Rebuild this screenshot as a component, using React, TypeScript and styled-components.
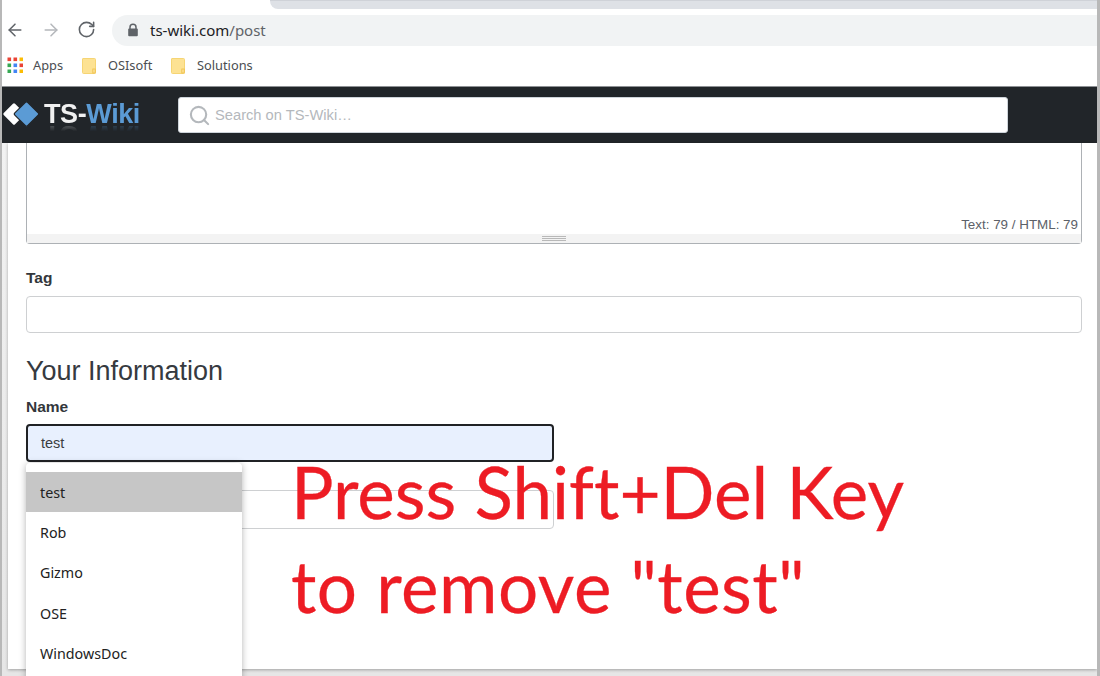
import React from "react";
import styled, { createGlobalStyle } from "styled-components";
import { ArrowLeft, ArrowRight, RotateCw, Search } from "lucide-react";

const GlobalStyle = createGlobalStyle`
  html, body {
    margin: 0;
    padding: 0;
    background: #fff;
  }
  * {
    box-sizing: border-box;
  }
`;

const Window = styled.div`
  position: relative;
  width: 1100px;
  height: 676px;
  overflow: hidden;
  display: flex;
  flex-direction: column;
  border-left: 2px solid #b8b8b8;
  border-right: 3px solid #b8b8b8;
  background: #fff;
  font-family: "Liberation Sans", Arial, sans-serif;
  color: #212529;
`;

const TabStrip = styled.div`
  flex: none;
  height: 14px;
  padding-left: 268px;
`;

const Tab = styled.div`
  height: 9px;
  background: #dee1e6;
  border-top: 1px solid #cfd2d8;
  border-bottom-left-radius: 8px;
`;

const Toolbar = styled.div`
  flex: none;
  height: 32px;
  display: flex;
  align-items: center;
`;

const NavIcons = styled.div`
  flex: none;
  width: 110px;
  padding-left: 3px;
  display: flex;
  gap: 16px;
`;

const NavButton = styled.span<{ $dim?: boolean }>`
  display: flex;
  width: 20px;
  height: 20px;
  color: ${(p) => (p.$dim ? "#b4b7bb" : "#5f6368")};
`;

const AddressPill = styled.div`
  flex: 1;
  height: 31px;
  display: flex;
  align-items: center;
  gap: 11px;
  padding-left: 15px;
  background: #f1f3f4;
  border-radius: 16px 0 0 16px;
  font-family: "Noto Sans", "Open Sans", sans-serif;
  font-size: 15px;
  color: #202124;
`;

const UrlPath = styled.span`
  color: #5f6368;
`;

const BookmarkBar = styled.div`
  flex: none;
  height: 40px;
  display: flex;
  align-items: center;
  padding-left: 5px;
  padding-bottom: 2px;
  font-family: "Noto Sans", "Open Sans", sans-serif;
  font-size: 12.8px;
  color: #4a4d51;
`;

const Bookmark = styled.div<{ $width: number; $gap: number }>`
  display: flex;
  align-items: center;
  gap: ${(p) => p.$gap}px;
  width: ${(p) => p.$width}px;
`;

const Navbar = styled.div`
  flex: none;
  height: 57px;
  display: flex;
  align-items: center;
  background: #212529;
  border-top: 1px solid #8d9094;
`;

const Logo = styled.div`
  flex: none;
  width: 176px;
  padding-bottom: 2px;
  display: flex;
  align-items: center;
  gap: 3px;
`;

const LogoText = styled.div`
  font-family: "Liberation Sans", Arial, sans-serif;
  font-size: 27px;
  font-weight: 700;
  line-height: 30px;
  letter-spacing: -0.4px;
  color: #f0f0f0;
  -webkit-box-reflect: below -9px linear-gradient(transparent 62%, rgba(255, 255, 255, 0.45));
`;

const LogoAccent = styled.span`
  color: #5b9bd5;
`;

const SearchBox = styled.div`
  width: 830px;
  height: 36px;
  display: flex;
  align-items: center;
  gap: 4px;
  padding-left: 9px;
  background: #fff;
  border: 1px solid #ced4da;
  border-radius: 3px;
  font-size: 14.7px;
  color: #b4b8bc;
`;

const Page = styled.div`
  flex: 1;
  min-height: 0;
  padding: 0 0 7px 6px;
  background: linear-gradient(#f2f2f2, #e6e6e6);
`;

const Card = styled.div`
  height: 100%;
  padding: 0 15px 0 18px;
  background: #fff;
  box-shadow: 0 1px 3px rgba(0, 0, 0, 0.3);
`;

const EditorBox = styled.div`
  height: 101px;
  display: flex;
  flex-direction: column;
  justify-content: flex-end;
  border: 1px solid #adb1b5;
  border-top: 0;
  border-radius: 0 0 4px 4px;
`;

const CharCount = styled.div`
  padding: 0 3px 2px 0;
  text-align: right;
  font-size: 13.4px;
  line-height: 15px;
  color: #5c6168;
`;

const ResizeBar = styled.div`
  height: 9px;
  display: flex;
  flex-direction: column;
  align-items: center;
  justify-content: center;
  gap: 1px;
  background: #f3f3f3;
`;

const ResizeLine = styled.span`
  width: 24px;
  height: 1px;
  background: #b8b8b8;
`;

const Label = styled.div<{ $top: number }>`
  margin-top: ${(p) => p.$top}px;
  font-size: 15.5px;
  font-weight: 700;
  line-height: 18px;
  color: #33373b;
`;

const Field = styled.div<{ $half?: boolean; $top: number; $height: number }>`
  width: ${(p) => (p.$half ? "528px" : "100%")};
  height: ${(p) => p.$height}px;
  margin-top: ${(p) => p.$top}px;
  border: 1.5px solid #ced0d2;
  border-radius: 4px;
`;

const ActiveField = styled.div`
  width: 528px;
  height: 38px;
  margin-top: 8px;
  display: flex;
  align-items: center;
  padding-left: 13px;
  background: #e8f0fe;
  border: 2px solid #202225;
  border-radius: 4px;
  font-size: 14.5px;
  color: #3a3d41;
`;

const SectionTitle = styled.h2`
  margin: 22px 0 0;
  font-size: 27px;
  font-weight: 400;
  line-height: 32px;
  color: #363a3f;
`;

const Suggestions = styled.ul`
  position: absolute;
  left: 24px;
  top: 463px;
  width: 216px;
  height: 220px;
  margin: 0;
  padding: 9px 0 0;
  list-style: none;
  background: #fff;
  border-radius: 4px 4px 0 0;
  box-shadow: 0 1px 7px rgba(0, 0, 0, 0.3);
  font-family: "Noto Sans", "Open Sans", sans-serif;
  font-size: 14.3px;
  color: #222;
`;

const Suggestion = styled.li<{ $active?: boolean }>`
  height: 40.4px;
  display: flex;
  align-items: center;
  padding-left: 14px;
  background: ${(p) => (p.$active ? "#c6c6c6" : "transparent")};
`;

const Annotation = styled.div`
  position: absolute;
  left: 289px;
  top: 445px;
  font-family: Lato, "Open Sans", sans-serif;
  font-size: 71px;
  font-variant-ligatures: none;
  line-height: 94px;
  white-space: nowrap;
  color: #ed1c24;
  -webkit-text-stroke: 0.3px #ed1c24;
`;

const AnnotationLine = styled.div<{ $spacing: number }>`
  letter-spacing: ${(p) => p.$spacing}px;
`;

const AppsIcon = () => {
  const colors = ["#ea4335", "#ea4335", "#fbbc04", "#34a853", "#4285f4", "#ea4335", "#34a853", "#4285f4", "#fbbc04"];
  return (
    <svg width="16" height="16" viewBox="0 0 16 16">
      {colors.map((c, i) => (
        <rect key={i} x={(i % 3) * 6 + 0.5} y={Math.floor(i / 3) * 6 + 0.5} width="3.6" height="3.6" fill={c} />
      ))}
    </svg>
  );
};

const FolderIcon = () => (
  <svg width="15" height="17" viewBox="0 0 15 17">
    <path d="M1 1.5h11.5a1 1 0 0 1 1 1v13a1 1 0 0 1-1 1H1.5a1 1 0 0 1-1-1V2a.5.5 0 0 1 .5-.5z" fill="#fde293" stroke="#f6d574" />
    <rect x="10.8" y="12" width="2.4" height="4" fill="none" stroke="#eebf4a" strokeWidth="0.8" />
  </svg>
);

const LockIcon = () => (
  <svg width="12" height="14" viewBox="0 0 12 14">
    <path d="M3 6V4.2a3 3 0 0 1 6 0V6" fill="none" stroke="#5f6368" strokeWidth="1.5" />
    <rect x="1.2" y="5.6" width="9.6" height="7.6" rx="1" fill="#5f6368" />
  </svg>
);

const LogoMark = () => (
  <svg width="39" height="26" viewBox="0 0 39 26">
    <rect x="4" y="5" width="16" height="16" rx="1.5" transform="rotate(45 12 13)" fill="#fff" />
    <rect x="15.5" y="4" width="18" height="18" rx="1.5" transform="rotate(45 24.5 13)" fill="#5b9bd5" stroke="#212529" strokeWidth="1.2" />
  </svg>
);

export default function App() {
  return (
    <Window>
      <GlobalStyle />
      <TabStrip>
        <Tab />
      </TabStrip>
      <Toolbar>
        <NavIcons>
          <NavButton>
            <ArrowLeft size={20} strokeWidth={1.8} />
          </NavButton>
          <NavButton $dim>
            <ArrowRight size={20} strokeWidth={1.8} />
          </NavButton>
          <NavButton>
            <RotateCw size={19} strokeWidth={2} />
          </NavButton>
        </NavIcons>
        <AddressPill>
          <LockIcon />
          <span>
            ts-wiki.com<UrlPath>/post</UrlPath>
          </span>
        </AddressPill>
      </Toolbar>
      <BookmarkBar>
        <Bookmark $width={75} $gap={10}>
          <AppsIcon />
          Apps
        </Bookmark>
        <Bookmark $width={89} $gap={11}>
          <FolderIcon />
          OSIsoft
        </Bookmark>
        <Bookmark $width={100} $gap={11}>
          <FolderIcon />
          Solutions
        </Bookmark>
      </BookmarkBar>
      <Navbar>
        <Logo>
          <LogoMark />
          <LogoText>
            TS-<LogoAccent>Wiki</LogoAccent>
          </LogoText>
        </Logo>
        <SearchBox>
          <Search size={23} color="#b4b8bc" strokeWidth={2.2} />
          Search on TS-Wiki…
        </SearchBox>
      </Navbar>
      <Page>
        <Card>
          <EditorBox>
            <CharCount>Text: 79 / HTML: 79</CharCount>
            <ResizeBar>
              <ResizeLine />
              <ResizeLine />
              <ResizeLine />
            </ResizeBar>
          </EditorBox>
          <Label $top={25}>Tag</Label>
          <Field $top={9} $height={37} />
          <SectionTitle>Your Information</SectionTitle>
          <Label $top={11}>Name</Label>
          <ActiveField>test</ActiveField>
          <Field $half $top={28} $height={39} />
        </Card>
      </Page>
      <Suggestions>
        <Suggestion $active>test</Suggestion>
        <Suggestion>Rob</Suggestion>
        <Suggestion>Gizmo</Suggestion>
        <Suggestion>OSE</Suggestion>
        <Suggestion>WindowsDoc</Suggestion>
      </Suggestions>
      <Annotation>
        <AnnotationLine $spacing={0}>Press Shift+Del Key</AnnotationLine>
        <AnnotationLine $spacing={0.5}>to remove "test"</AnnotationLine>
      </Annotation>
    </Window>
  );
}
